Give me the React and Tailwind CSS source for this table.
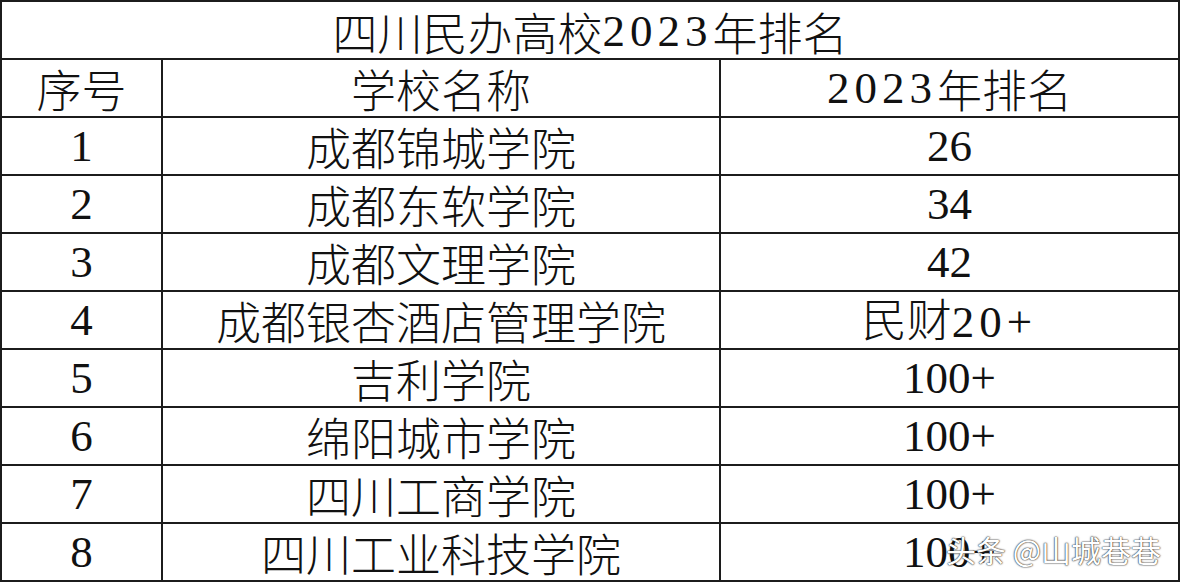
const cjk = "font-['Noto_Sans_CJK_SC',sans-serif] font-light";
const serif = "font-['Liberation_Serif',serif] font-normal";
const song = "font-['Liberation_Serif',serif] font-normal tracking-[5px]";

const rows = [
  { no: "1", name: "成都锦城学院", rank: "26" },
  { no: "2", name: "成都东软学院", rank: "34" },
  { no: "3", name: "成都文理学院", rank: "42" },
  { no: "4", name: "成都银杏酒店管理学院", rank: "民财20+" },
  { no: "5", name: "吉利学院", rank: "100+" },
  { no: "6", name: "绵阳城市学院", rank: "100+" },
  { no: "7", name: "四川工商学院", rank: "100+" },
  { no: "8", name: "四川工业科技学院", rank: "100+" },
];

const cell =
  "h-[58px] border-r-2 border-b-2 border-[#1c1c1c] flex items-center justify-center leading-none text-[#111] text-[45px]";

function Rank({ value }) {
  if (value.startsWith("民财")) {
    return (
      <span>
        <span className={cjk}>民财</span>
        <span className={song}>20+</span>
      </span>
    );
  }
  return <span className={serif}>{value}</span>;
}

export default function App() {
  return (
    <div className="relative w-[1180px] h-[582px] bg-white overflow-hidden">
      <div className="grid grid-cols-[161px_558px_459px] w-[1180px] border-l-2 border-t-2 border-[#1c1c1c]">
        <div className={`${cell} col-span-3 ${cjk} text-[44px] pt-[2px]`}>
          四川民办高校<span className={song}>2023</span>年排名
        </div>
        <div className={`${cell} ${cjk}`}>序号</div>
        <div className={`${cell} ${cjk}`}>学校名称</div>
        <div className={`${cell} ${cjk}`}>
          <span className={song}>2023</span>年排名
        </div>
        {rows.map((r) => (
          <div key={r.no} className="contents">
            <div className={`${cell} ${serif}`}>{r.no}</div>
            <div className={`${cell} ${cjk}`}>{r.name}</div>
            <div className={cell}>
              <Rank value={r.rank} />
            </div>
          </div>
        ))}
      </div>
      <div className="absolute left-[946px] top-[534px] text-[30px] leading-none text-white font-['Noto_Sans_CJK_SC',sans-serif] [text-shadow:0_0_2px_#333,0_0_1px_#000]">
        头条 @山城巷巷
      </div>
    </div>
  );
}
